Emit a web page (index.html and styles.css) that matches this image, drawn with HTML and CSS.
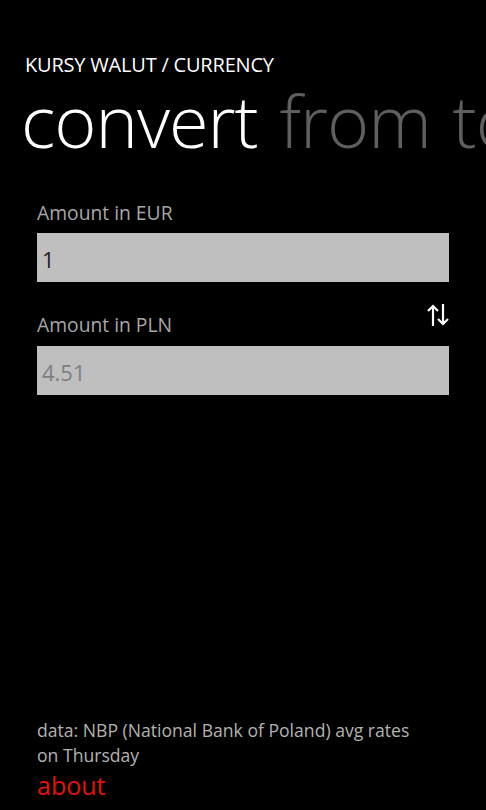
FILE: index.html
```html
<!DOCTYPE html>
<html lang="en">
<head>
  <meta charset="UTF-8" />
  <meta name="viewport" content="width=device-width, initial-scale=1.0" />
  <title>Kursy walut</title>
  <link rel="stylesheet" href="styles.css">
</head>
<body>
  <div class="page">
    <div class="app-title">KURSY WALUT / CURRENCY</div>

    <div class="pivot">
      <span class="pivot-item active">convert</span>
      <span class="pivot-item">from</span>
      <span class="pivot-item">to</span>
    </div>

    <div class="form">
      <label class="field-label">Amount in EUR</label>
      <div class="field-box">1</div>

      <div class="label-row">
        <label class="field-label">Amount in PLN</label>
        <svg class="swap" width="22" height="24" viewBox="0 0 22 24">
          <path d="M6 23V3M1 8l5-5 5 5" fill="none" stroke="#fff" stroke-width="2.2" stroke-linejoin="miter"/>
          <path d="M16 1v20M11 16l5 5 5-5" fill="none" stroke="#fff" stroke-width="2.2" stroke-linejoin="miter"/>
        </svg>
      </div>
      <div class="field-box readonly">4.51</div>
    </div>

    <div class="footer">
      <div class="source">data: NBP (National Bank of Poland) avg rates on Thursday</div>
      <a class="about" href="#">about</a>
    </div>
  </div>
</body>
</html>
```

FILE: styles.css
```css
body {
  margin: 0;
  background: #000;
  color: #fff;
  font-family: 'Open Sans', 'Noto Sans', sans-serif;
}
.page {
  height: 810px;
  display: flex;
  flex-direction: column;
  overflow: hidden;
}
.app-title {
  margin: 52px 0 0 25px;
  font-size: 20px;
  line-height: 26px;
  letter-spacing: -0.2px;
}
.pivot {
  margin: 2px 0 0 21px;
  white-space: nowrap;
  font-size: 72px;
  font-weight: 300;
  line-height: 80px;
  letter-spacing: -1px;
}
.pivot-item {
  color: #5f5f5f;
  margin-right: 4px;
}
.pivot-item.active {
  color: #fff;
}
.form {
  margin: 40px 37px 0 37px;
}
.field-label {
  display: block;
  color: #a8a8a8;
  font-size: 19.3px;
  line-height: 26px;
}
.field-box {
  margin-top: 7px;
  height: 49px;
  background: #bfbfbf;
  color: #222;
  font-size: 22px;
  line-height: 52px;
  padding-left: 5px;
}
.label-row + .field-box {
  margin-top: 8px;
}
.field-box.readonly {
  color: #7f7f7f;
}
.label-row {
  display: flex;
  justify-content: space-between;
  align-items: flex-end;
  margin-top: 21px;
}
.swap {
  margin-bottom: 11px;
}
.footer {
  margin: auto 37px 8px 37px;
}
.source {
  max-width: 395px;
  color: #b3b3b3;
  font-size: 17.6px;
  line-height: 25px;
}
.about {
  display: block;
  color: #e51400;
  font-size: 25px;
  line-height: 34px;
  text-decoration: none;
}
```
